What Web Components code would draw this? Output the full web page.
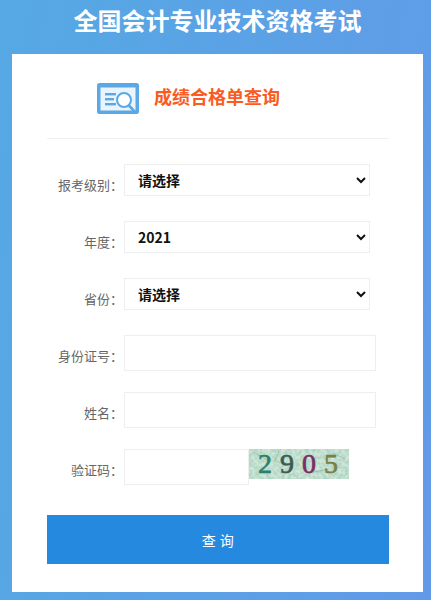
<!DOCTYPE html>
<html lang="zh-CN">
<head>
<meta charset="utf-8">
<title>全国会计专业技术资格考试</title>
<style>
    html, body { margin: 0; padding: 0; }
    body { font-family: "Noto Sans CJK SC", "Noto Sans", sans-serif; overflow: hidden; }
</style>
</head>
<body>
<exam-page heading="全国会计专业技术资格考试">
    <query-header>成绩合格单查询</query-header>
    <form-row label="报考级别："><exam-select options="请选择"></exam-select></form-row>
    <form-row label="年度："><exam-select options="2021"></exam-select></form-row>
    <form-row label="省份："><exam-select options="请选择"></exam-select></form-row>
    <form-row label="身份证号："><exam-input></exam-input></form-row>
    <form-row label="姓名："><exam-input></exam-input></form-row>
    <form-row label="验证码："><exam-input short></exam-input><captcha-image code="2905"></captcha-image></form-row>
    <submit-button>查 询</submit-button>
</exam-page>

<script>
class ExamPage extends HTMLElement {
    constructor() {
        super();
        this.attachShadow({ mode: 'open' });
    }

    connectedCallback() {
        this.shadowRoot.innerHTML = `
            <style>
                :host {
                    display: block;
                    width: 431px;
                    height: 600px;
                    box-sizing: border-box;
                    padding: 0 8px 8px 12px;
                    background: linear-gradient(100deg, #55a9e3, #619ae9);
                }
                h1 {
                    margin: 0;
                    height: 54px;
                    padding-bottom: 14px;
                    box-sizing: border-box;
                    text-align: center;
                    font-size: 24px;
                    line-height: 40px;
                    font-weight: 700;
                    color: #fff;
                }
                .card {
                    height: 538px;
                    box-sizing: border-box;
                    padding: 0 34px 0 35px;
                    background: #fff;
                }
            </style>
            <h1>${this.getAttribute('heading')}</h1>
            <div class="card"><slot></slot></div>
        `;
    }
}

class QueryHeader extends HTMLElement {
    constructor() {
        super();
        this.attachShadow({ mode: 'open' });
    }

    connectedCallback() {
        this.shadowRoot.innerHTML = `
            <style>
                :host {
                    display: flex;
                    align-items: center;
                    gap: 14px;
                    height: 84px;
                    margin-bottom: 25px;
                    padding: 0 0 0 50px;
                    border-bottom: 1px solid #efefef;
                    box-sizing: content-box;
                }
                svg { flex: none; width: 43px; height: 32px; margin-top: 6px; }
                span { font-size: 18px; font-weight: 700; color: #fb5b20; margin-top: -1px; }
            </style>
            <svg viewBox="0 0 43 32" fill="none">
                <rect x="0" y="0" width="42" height="31" rx="2.5" fill="#5aa9e6"/>
                <rect x="3.5" y="4.5" width="35" height="23" fill="#eaf4fc"/>
                <rect x="8" y="10" width="11" height="2.4" fill="#5aa9e6"/>
                <rect x="8" y="15" width="9" height="2.4" fill="#5aa9e6"/>
                <rect x="8" y="20" width="11" height="2.4" fill="#5aa9e6"/>
                <circle cx="27" cy="17" r="7" fill="#fff" stroke="#5aa9e6" stroke-width="2"/>
                <path d="M32 22.5 L37.5 28.5" stroke="#5aa9e6" stroke-width="2.6" stroke-linecap="round"/>
            </svg>
            <span><slot></slot></span>
        `;
    }
}

class FormRow extends HTMLElement {
    constructor() {
        super();
        this.attachShadow({ mode: 'open' });
    }

    connectedCallback() {
        this.shadowRoot.innerHTML = `
            <style>
                :host {
                    display: flex;
                    align-items: flex-start;
                    height: 40px;
                    margin-bottom: 17px;
                }
                label {
                    flex: none;
                    width: 76px;
                    margin-right: 1px;
                    text-align: right;
                    font-size: 13px;
                    line-height: 42px;
                    color: #666;
                    white-space: nowrap;
                }
            </style>
            <label>${this.getAttribute('label')}</label>
            <slot></slot>
        `;
    }
}

class ExamSelect extends HTMLElement {
    constructor() {
        super();
        this.attachShadow({ mode: 'open' });
    }

    connectedCallback() {
        const options = this.getAttribute('options').split(',');
        this.shadowRoot.innerHTML = `
            <style>
                :host { display: block; }
                select {
                    display: block;
                    width: 246px;
                    height: 32px;
                    margin: 0;
                    padding: 0 0 0 9px;
                    border: 1px solid #eee;
                    border-radius: 0;
                    background-color: #fff;
                    font: 700 14px "Noto Sans CJK SC", "Noto Sans", sans-serif;
                    color: #111;
                    outline: none;
                }
            </style>
            <select>${options.map(o => `<option>${o}</option>`).join('')}</select>
        `;
    }
}

class ExamInput extends HTMLElement {
    constructor() {
        super();
        this.attachShadow({ mode: 'open' });
    }

    connectedCallback() {
        const width = this.hasAttribute('short') ? 125 : 252;
        this.shadowRoot.innerHTML = `
            <style>
                :host { display: block; flex: none; }
                input {
                    display: block;
                    width: ${width}px;
                    height: 36px;
                    margin: 0;
                    padding: 0 8px;
                    box-sizing: border-box;
                    border: 1px solid #eee;
                    border-radius: 0;
                    background: #fff;
                    outline: none;
                }
            </style>
            <input type="text">
        `;
    }
}

class CaptchaImage extends HTMLElement {
    constructor() {
        super();
        this.attachShadow({ mode: 'open' });
    }

    connectedCallback() {
        const colors = ['#2f7f6a', '#3d5a52', '#7a2f63', '#7c7f45'];
        const digits = this.getAttribute('code').split('')
            .map((d, i) => `<span style="color:${colors[i]}">${d}</span>`).join('');
        this.shadowRoot.innerHTML = `
            <style>
                :host {
                    display: block;
                    position: relative;
                    flex: none;
                    width: 100px;
                    height: 30px;
                    overflow: hidden;
                    background: #bfdccb;
                }
                svg { position: absolute; inset: 0; width: 100%; height: 100%; }
                .code {
                    position: relative;
                    display: flex;
                    gap: 8px;
                    padding-left: 9px;
                    font: 400 28px/29px "Liberation Serif", serif;
                    -webkit-text-stroke: 0.7px currentColor;
                }
            </style>
            <svg viewBox="0 0 100 30" preserveAspectRatio="none">
                <filter id="grain" x="0" y="0" width="100%" height="100%"><feTurbulence type="fractalNoise" baseFrequency="0.28" numOctaves="3" seed="7"/><feColorMatrix values="0 0 0 0 0.42  0 0 0 0 0.66  0 0 0 0 0.54  2.4 0 0 0 -0.75"/></filter>
                <rect width="100" height="30" fill="#cfe6d8"/>
                <rect width="100" height="30" filter="url(#grain)"/>
                <path d="M4 3 L20 12 M30 2 L26 12 M60 24 L80 20 M84 4 L96 10" stroke="#9fbfae" stroke-width="1" fill="none"/>
            </svg>
            <div class="code">${digits}</div>
        `;
    }
}

class SubmitButton extends HTMLElement {
    constructor() {
        super();
        this.attachShadow({ mode: 'open' });
    }

    connectedCallback() {
        this.shadowRoot.innerHTML = `
            <style>
                :host { display: block; margin-top: 26px; }
                button {
                    display: block;
                    width: 342px;
                    height: 49px;
                    padding: 0;
                    border: 0;
                    background: #2589e0;
                    color: #fff;
                    font: 400 14px "Noto Sans CJK SC", "Noto Sans", sans-serif;
                    letter-spacing: 0.5px;
                    cursor: pointer;
                }
            </style>
            <button type="button"><slot></slot></button>
        `;
    }
}

customElements.define('exam-page', ExamPage);
customElements.define('query-header', QueryHeader);
customElements.define('form-row', FormRow);
customElements.define('exam-select', ExamSelect);
customElements.define('exam-input', ExamInput);
customElements.define('captcha-image', CaptchaImage);
customElements.define('submit-button', SubmitButton);
</script>
</body>
</html>
